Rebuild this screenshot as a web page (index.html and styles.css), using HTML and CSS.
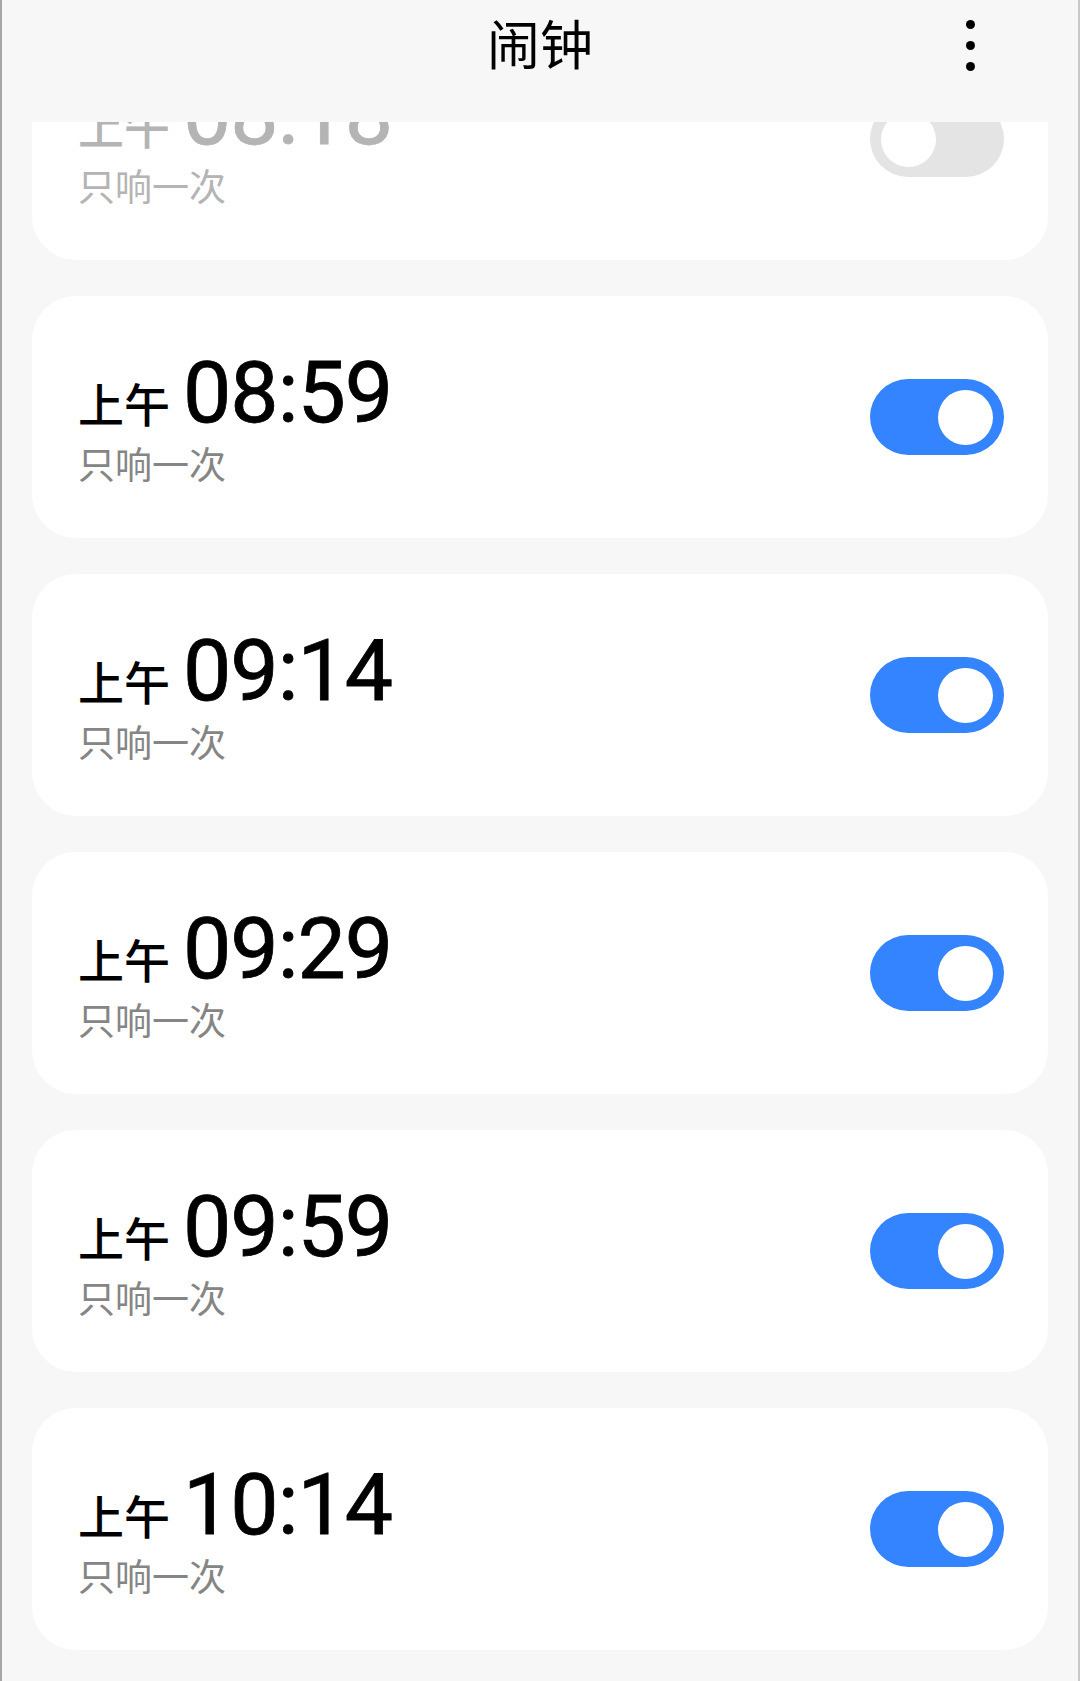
FILE: index.html
```html
<!DOCTYPE html>
<html lang="zh-CN">
<head>
    <meta charset="UTF-8">
    <meta name="viewport" content="width=device-width, initial-scale=1.0">
    <title>闹钟</title>
    <link rel="stylesheet" href="styles.css">
</head>
<body>
    <div class="screen">
        <header class="topbar">
            <h1>闹钟</h1>
            <div class="menu">
                <span></span><span></span><span></span>
            </div>
        </header>
        <main class="list">
            <div class="list-inner">
                <!-- this one is scrolled under the header -->
                <div class="alarm off">
                    <div class="info">
                        <div class="when"><span class="ampm">上午</span><span class="time">08:18</span></div>
                        <div class="repeat">只响一次</div>
                    </div>
                    <span class="switch"><span class="knob"></span></span>
                </div>

                <div class="alarm">
                    <div class="info">
                        <div class="when"><span class="ampm">上午</span><span class="time">08:59</span></div>
                        <div class="repeat">只响一次</div>
                    </div>
                    <span class="switch on"><span class="knob"></span></span>
                </div>

                <div class="alarm">
                    <div class="info">
                        <div class="when"><span class="ampm">上午</span><span class="time">09:14</span></div>
                        <div class="repeat">只响一次</div>
                    </div>
                    <span class="switch on"><span class="knob"></span></span>
                </div>

                <div class="alarm">
                    <div class="info">
                        <div class="when"><span class="ampm">上午</span><span class="time">09:29</span></div>
                        <div class="repeat">只响一次</div>
                    </div>
                    <span class="switch on"><span class="knob"></span></span>
                </div>

                <div class="alarm">
                    <div class="info">
                        <div class="when"><span class="ampm">上午</span><span class="time">09:59</span></div>
                        <div class="repeat">只响一次</div>
                    </div>
                    <span class="switch on"><span class="knob"></span></span>
                </div>

                <div class="alarm">
                    <div class="info">
                        <div class="when"><span class="ampm">上午</span><span class="time">10:14</span></div>
                        <div class="repeat">只响一次</div>
                    </div>
                    <span class="switch on"><span class="knob"></span></span>
                </div>
            </div>
        </main>
    </div>
</body>
</html>
```

FILE: styles.css
```css
* {
    box-sizing: border-box;
}
body {
    margin: 0;
    padding: 0;
    background-color: #f7f7f7;
    font-family: Roboto, "Noto Sans CJK SC", sans-serif;
    color: #000;
}
.screen {
    width: 1080px;
    height: 1681px;
    border-left: 2px solid #a8a8a8;
    border-right: 2px solid #c8c8c8;
    background-color: #f7f7f7;
    display: flex;
    flex-direction: column;
    overflow: hidden;
}
.topbar {
    height: 122px;
    flex-shrink: 0;
    display: flex;
    align-items: flex-start;
    justify-content: center;
    position: relative;
}
.topbar h1 {
    margin: 0;
    padding-top: 6px;
    font-family: "Noto Sans CJK SC", sans-serif;
    font-size: 53px;
    font-weight: 400;
    line-height: 72px;
}
.menu {
    position: absolute;
    top: 20px;
    left: 964px;
    display: flex;
    flex-direction: column;
    gap: 12px;
}
.menu span {
    width: 9px;
    height: 9px;
    border-radius: 50%;
    background: #000;
}
.list {
    flex: 1;
    overflow: hidden;
}
.list-inner {
    margin-top: -104px;
    padding: 0 30px;
    display: flex;
    flex-direction: column;
    gap: 36px;
}
.alarm {
    height: 242px;
    background: white;
    border-radius: 44px;
    padding: 0 44px 0 46px;
    display: flex;
    align-items: center;
    justify-content: space-between;
}
.info {
    display: flex;
    flex-direction: column;
    gap: 0;
}
.when {
    display: flex;
    align-items: baseline;
    gap: 13px;
    line-height: 88px;
}
.ampm {
    font-family: "Noto Sans CJK SC", sans-serif;
    font-size: 46px;
    font-weight: 500;
}
.time {
    font-size: 86px;
    font-weight: 400;
    letter-spacing: -1px;
    -webkit-text-stroke: 0.8px currentColor;
}
.repeat {
    font-family: "Noto Sans CJK SC", sans-serif;
    font-size: 37px;
    line-height: 40px;
    margin-top: -3px;
    margin-bottom: 3px;
    color: #858585;
}
.alarm.off .when,
.alarm.off .repeat {
    color: #b4b4b4;
}
.switch {
    width: 134px;
    height: 76px;
    border-radius: 38px;
    background: #e4e4e4;
    display: flex;
    align-items: center;
    padding: 0 11px;
}
.switch.on {
    background: #3483ff;
    justify-content: flex-end;
}
.knob {
    width: 55px;
    height: 55px;
    border-radius: 50%;
    background: white;
}
```
